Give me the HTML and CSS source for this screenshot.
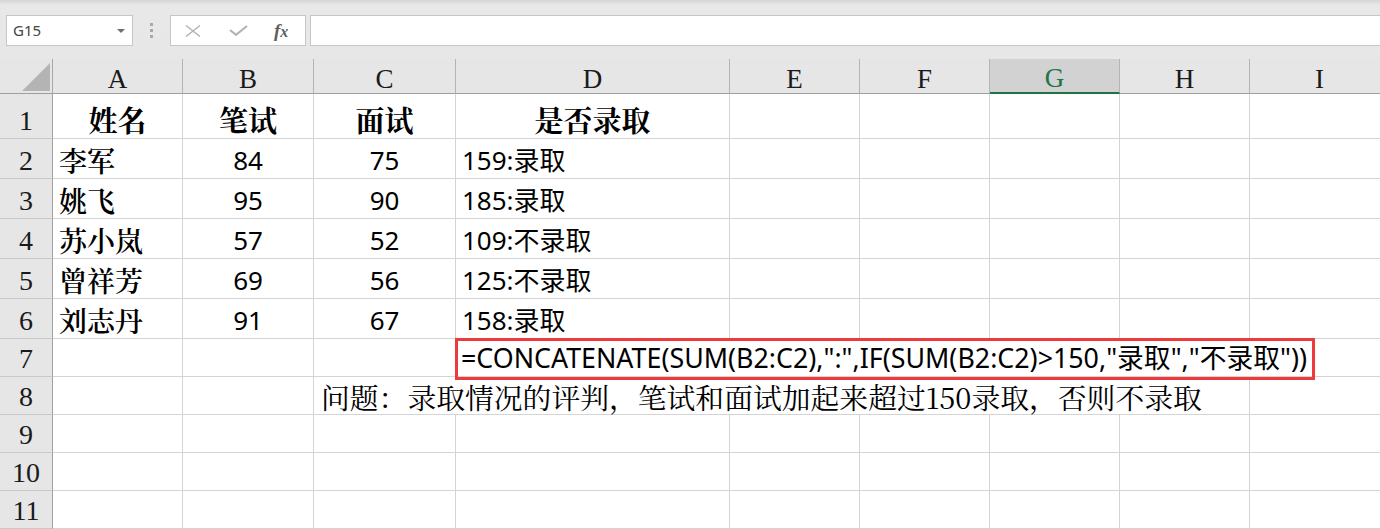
FILE: index.html
```html
<!DOCTYPE html>
<html lang="zh-CN">
<head>
<meta charset="utf-8">
<title>Excel</title>
<link rel="stylesheet" href="styles.css">
</head>
<body>
<div class="app">
  <div class="toolbar">
    <div class="namebox"><span class="ref">G15</span><span class="caret"></span></div>
    <div class="grip"><i></i><i></i><i></i></div>
    <div class="fxbox">
      <svg class="ico-x" width="16" height="12" viewBox="0 0 16 12"><path d="M1 0.5 L15 11.5 M15 0.5 L1 11.5"/></svg>
      <svg class="ico-check" width="19" height="11" viewBox="0 0 19 11"><path d="M1 5 L7 9.8 L18 1"/></svg>
      <span class="fx">f<span class="fx-x">x</span></span>
    </div>
    <div class="fbar"></div>
  </div>

  <div class="sheet">
    <div class="corner"><span class="tri"></span></div>
    <div class="ch">A</div><div class="ch">B</div><div class="ch">C</div><div class="ch">D</div><div class="ch">E</div><div class="ch">F</div><div class="ch sel">G</div><div class="ch">H</div><div class="ch">I</div>

    <div class="rh">1</div>
    <div class="c hd">姓名</div><div class="c hd">笔试</div><div class="c hd">面试</div><div class="c hd">是否录取</div>
    <div class="c"></div><div class="c"></div><div class="c"></div><div class="c"></div><div class="c"></div>

    <div class="rh">2</div>
    <div class="c nm">李军</div><div class="c num mid">84</div><div class="c num mid">75</div><div class="c num">159:录取</div>
    <div class="c"></div><div class="c"></div><div class="c"></div><div class="c"></div><div class="c"></div>

    <div class="rh">3</div>
    <div class="c nm">姚飞</div><div class="c num mid">95</div><div class="c num mid">90</div><div class="c num">185:录取</div>
    <div class="c"></div><div class="c"></div><div class="c"></div><div class="c"></div><div class="c"></div>

    <div class="rh">4</div>
    <div class="c nm">苏小岚</div><div class="c num mid">57</div><div class="c num mid">52</div><div class="c num">109:不录取</div>
    <div class="c"></div><div class="c"></div><div class="c"></div><div class="c"></div><div class="c"></div>

    <div class="rh">5</div>
    <div class="c nm">曾祥芳</div><div class="c num mid">69</div><div class="c num mid">56</div><div class="c num">125:不录取</div>
    <div class="c"></div><div class="c"></div><div class="c"></div><div class="c"></div><div class="c"></div>

    <div class="rh">6</div>
    <div class="c nm">刘志丹</div><div class="c num mid">91</div><div class="c num mid">67</div><div class="c num">158:录取</div>
    <div class="c"></div><div class="c"></div><div class="c"></div><div class="c"></div><div class="c"></div>

    <div class="rh">7</div>
    <div class="c"></div><div class="c"></div><div class="c"></div>
    <div class="c num formula span6">=CONCATENATE(SUM(B2:C2),":",IF(SUM(B2:C2)&gt;150,"录取","不录取"))<span class="mark"></span></div>

    <div class="rh">8</div>
    <div class="c"></div><div class="c"></div>
    <div class="c note span6">问题：录取情况的评判，笔试和面试加起来超过150录取，否则不录取</div>
    <div class="c"></div>

    <div class="rh">9</div>
    <div class="c"></div><div class="c"></div><div class="c"></div><div class="c"></div><div class="c"></div><div class="c"></div><div class="c"></div><div class="c"></div><div class="c"></div>

    <div class="rh">10</div>
    <div class="c"></div><div class="c"></div><div class="c"></div><div class="c"></div><div class="c"></div><div class="c"></div><div class="c"></div><div class="c"></div><div class="c"></div>

    <div class="rh">11</div>
    <div class="c"></div><div class="c"></div><div class="c"></div><div class="c"></div><div class="c"></div><div class="c"></div><div class="c"></div><div class="c"></div><div class="c"></div>
  </div>
</div>
</body>
</html>
```

FILE: styles.css
```css
html, body {
  margin: 0;
  padding: 0;
}
body {
  width: 1380px;
  height: 529px;
  overflow: hidden;
  background: #e6e6e6;
  font-family: "Noto Sans", "Noto Sans CJK SC", sans-serif;
}
.app {
  width: 1380px;
  height: 529px;
  overflow: hidden;
}

/* ---------- formula bar ---------- */
.toolbar {
  height: 59px;
  box-sizing: border-box;
  padding-top: 15px;
  display: flex;
  align-items: flex-start;
  background: linear-gradient(#d6d6d6 0, #e8e8e8 5px, #e7e7e7 100%);
}
.namebox {
  margin-left: 6px;
  width: 127px;
  height: 31px;
  box-sizing: border-box;
  border: 1px solid #c6c6c6;
  background: #fff;
  display: flex;
  align-items: center;
  justify-content: space-between;
  padding: 0 7px 0 6px;
}
.ref {
  font-family: "Noto Sans", sans-serif;
  font-size: 15px;
  color: #444;
  line-height: 1;
}
.caret {
  width: 0;
  height: 0;
  border-left: 4px solid transparent;
  border-right: 4px solid transparent;
  border-top: 4px solid #6f6f6f;
}
.grip {
  width: 3px;
  margin: 0 17px;
  height: 31px;
  display: flex;
  flex-direction: column;
  justify-content: center;
  gap: 3px;
}
.grip i {
  display: block;
  width: 3px;
  height: 3px;
  background: #a9a9a9;
}
.fxbox {
  width: 136px;
  height: 31px;
  box-sizing: border-box;
  border: 1px solid #c6c6c6;
  background: #fff;
  display: flex;
  align-items: center;
  padding-left: 14px;
}
.ico-x {
  fill: none;
  stroke: #b3b3b3;
  stroke-width: 1.4;
}
.ico-check {
  margin-left: 28px;
  fill: none;
  stroke: #b3b3b3;
  stroke-width: 2.2;
}
.fx {
  margin-left: 26px;
  font-family: "Liberation Serif", serif;
  font-style: italic;
  font-weight: bold;
  font-size: 19px;
  color: #606060;
  line-height: 1;
}
.fx-x {
  font-size: 16px;
}
.fbar {
  margin-left: 4px;
  flex: 1;
  height: 31px;
  box-sizing: border-box;
  border: 1px solid #c6c6c6;
  border-right: none;
  background: #fff;
}

/* ---------- sheet grid ---------- */
.sheet {
  display: grid;
  grid-template-columns: 53px 130px 131px 142px 274px 130px 130px 130px 130px 140px;
  grid-template-rows: 35px 45px repeat(5, 40px) repeat(5, 38px);
  width: 1390px;
}
.corner {
  background: #e6e6e6;
  border-right: 1px solid #a8a8a8;
  border-bottom: 1px solid #9e9e9e;
  position: relative;
}
.tri {
  position: absolute;
  right: 2px;
  bottom: 2px;
  width: 28px;
  height: 28px;
  background: #b4b4b4;
  clip-path: polygon(100% 0, 100% 100%, 0 100%);
}
.ch {
  background: #e6e6e6;
  border-right: 1px solid #b4b4b4;
  border-bottom: 1px solid #9e9e9e;
  display: flex;
  justify-content: center;
  align-items: flex-end;
  font-family: "Liberation Serif", serif;
  font-size: 27px;
  line-height: 1;
  color: #1a1a1a;
}
.ch.sel {
  background: #d2d2d2;
  color: #217346;
  border-bottom: 2px solid #217346;
}
.rh {
  background: #e6e6e6;
  border-right: 1px solid #a0a0a0;
  border-bottom: 1px solid #c9c9c9;
  display: flex;
  justify-content: center;
  align-items: flex-end;
  padding-bottom: 3px;
  font-family: "Liberation Serif", serif;
  font-size: 28px;
  line-height: 1;
  color: #1a1a1a;
}
.c {
  background: #fff;
  border-right: 1px solid #d4d4d4;
  border-bottom: 1px solid #d4d4d4;
  display: flex;
  align-items: flex-end;
  white-space: nowrap;
  min-width: 0;
  line-height: 1;
  color: #000;
}
.hd {
  justify-content: center;
  font-family: "Noto Serif CJK SC", "Noto Sans CJK SC", serif;
  font-weight: 700;
  font-size: 29px;
  padding-bottom: 4px;
}
.nm {
  font-family: "Noto Serif CJK SC", "Noto Sans CJK SC", serif;
  font-weight: 600;
  font-size: 28px;
  padding: 0 0 4px 6px;
}
.num {
  font-family: "Noto Sans", "Noto Sans CJK SC", sans-serif;
  font-size: 26px;
  padding: 0 0 5px 6px;
}
.num.mid {
  justify-content: center;
  padding-left: 0;
}
.span6 {
  grid-column: span 6;
}
.formula {
  position: relative;
  padding-left: 5px;
  font-size: 26.8px;
  padding-bottom: 4px;
}
.mark {
  position: absolute;
  left: -1px;
  top: -1px;
  width: 860px;
  height: 42px;
  box-sizing: border-box;
  border: 3px solid #ec3a3d;
}
.note {
  font-family: "Noto Serif CJK SC", "Liberation Serif", "Noto Sans CJK SC", serif;
  font-size: 28.8px;
  padding: 0 0 2px 7px;
}
```
